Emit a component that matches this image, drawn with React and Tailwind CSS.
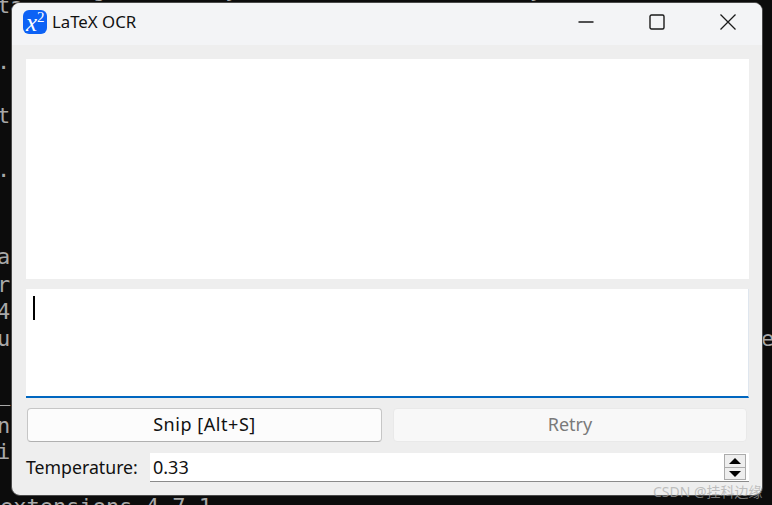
import React from 'react';

const terminalLines = [
  { top: -23, left: 0, text: '   Using cached by Kolesnik # 1    monkey%' },
  { top: -7, left: -3, text: 'ta' },
  { top: 49, left: -3, text: '.' },
  { top: 103, left: -3, text: 'ta' },
  { top: 131, left: -3, text: ' i' },
  { top: 157, left: -3, text: '.' },
  { top: 244, left: -3, text: 'a' },
  { top: 272, left: -3, text: 'ri' },
  { top: 299, left: -3, text: '4' },
  { top: 326, left: -3, text: 'us' },
  { top: 326, left: 761, text: 'e' },
  { top: 381, left: -3, text: '_' },
  { top: 413, left: -3, text: 'n' },
  { top: 439, left: -3, text: 'i' },
  { top: 494, left: 0, text: 'extensions 4.7.1' },
];

const SpinButton = ({ up }) => (
  <div className={`flex items-center justify-center border border-[#ababab] bg-[#eeeeee] w-[22px] ${up ? 'h-[14px]' : 'h-[12px] border-t-0'}`}>
    <svg width="12" height="6" viewBox="0 0 12 6">
      <path d={up ? 'M6 0 12 6H0Z' : 'M0 0H12L6 6Z'} fill="#000" />
    </svg>
  </div>
);

const App = () => {
  return (
    <div className="relative w-[772px] h-[505px] overflow-hidden bg-[#0c0c0c] font-['Noto_Sans',sans-serif]">
      {terminalLines.map((line) => (
        <div
          key={`${line.top}-${line.left}`}
          className="absolute whitespace-pre font-['DejaVu_Sans_Mono',monospace] text-[22px] leading-[26px] text-[#a8a8a8]"
          style={{ top: line.top, left: line.left }}
        >
          {line.text}
        </div>
      ))}

      {/* app window */}
      <div className="absolute left-[11px] top-[2px] w-[752px] h-[494px] flex flex-col overflow-hidden rounded-[9px] border border-[#4a4a4a] bg-[#eeeeee]">
        <div className="h-[42px] shrink-0 flex items-center bg-[#f3f4f6] pl-[11px] pb-[4px]">
          <div className="relative w-[24px] h-[24px] rounded-[6px] bg-[#0d62f5] text-white font-['Liberation_Serif',serif] overflow-hidden">
            <span className="absolute left-[3px] top-[1px] italic text-[25px] leading-[24px]">x</span>
            <span className="absolute left-[14px] top-[-1px] text-[15px] leading-[16px]">2</span>
          </div>
          <span className="ml-[5px] text-[16.8px] leading-[20px] text-[#111]">LaTeX OCR</span>
          <div className="ml-auto flex items-center text-[#1a1a1a]">
            <div className="w-[71px] flex justify-center">
              <svg width="16" height="16" viewBox="0 0 16 16" fill="none" stroke="currentColor" strokeWidth="1.3">
                <path d="M0.5 8H15.5" />
              </svg>
            </div>
            <div className="w-[71px] flex justify-center">
              <svg width="16" height="16" viewBox="0 0 16 16" fill="none" stroke="currentColor" strokeWidth="1.4">
                <rect x="1" y="1" width="14" height="14" rx="1.5" />
              </svg>
            </div>
            <div className="w-[71px] mr-[-1px] flex justify-center">
              <svg width="16" height="16" viewBox="0 0 16 16" fill="none" stroke="currentColor" strokeWidth="1.3">
                <path d="M0.5 0.5 15.5 15.5M15.5 0.5 0.5 15.5" />
              </svg>
            </div>
          </div>
        </div>

        <div className="flex-1 flex flex-col pl-[14px] pr-[13px] pt-[14px]">
          <div className="h-[220px] bg-white" />

          <div className="mt-[10px] h-[109px] bg-white border-r border-[#dfe6ee] border-b-2 border-b-[#0067c0] pl-[7px] pt-[7px]">
            <div className="w-[2px] h-[24px] bg-black" />
          </div>

          <div className="mt-[10px] flex gap-[11px] pl-px">
            <button className="w-[355px] h-[34px] pb-[2px] rounded-[4px] border border-[#c6c6c6] border-b-[#b0b0b0] bg-[#fcfcfc] text-[18px] tracking-[0.55px] text-[#111]">
              Snip [Alt+S]
            </button>
            <button className="w-[354px] h-[34px] pb-[2px] rounded-[4px] border border-[#e9e9e9] bg-[#f8f8f8] text-[18px] text-[#7a7a7a]">
              Retry
            </button>
          </div>

          <div className="mt-[11px] flex items-center">
            <span className="w-[124px] shrink-0 text-[17.7px] leading-[29px] text-[#111]">Temperature:</span>
            <div className="flex-1 h-[29px] flex items-start justify-between bg-white border-b border-[#8a8a8a] pl-[3px] pr-[3px]">
              <span className="text-[18px] leading-[28px] text-[#111]">0.33</span>
              <div className="pt-px flex flex-col">
                <SpinButton up />
                <SpinButton />
              </div>
            </div>
          </div>
        </div>
      </div>

      <div className="absolute left-[653px] top-[483px] whitespace-nowrap font-['Noto_Sans','Noto_Sans_CJK_SC',sans-serif] text-[14px] leading-[17px] text-[#a8a8a8]/70">
        CSDN @挂科边缘
      </div>
    </div>
  );
};

export default App;
